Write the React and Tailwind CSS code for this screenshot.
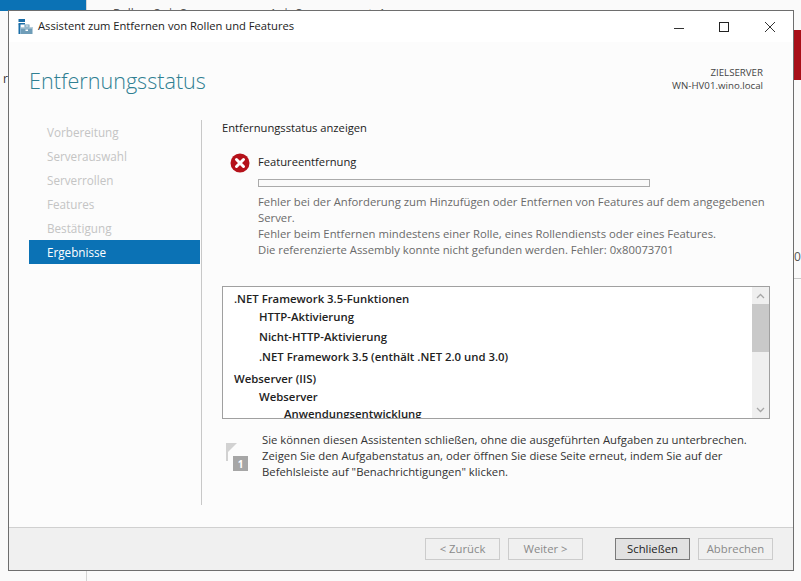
import React from "react";

const nav = ["Vorbereitung", "Serverauswahl", "Serverrollen", "Features", "Bestätigung"];

const rows = [
  { t: ".NET Framework 3.5-Funktionen", c: "pl-[11px]" },
  { t: "HTTP-Aktivierung", c: "pl-[36px]" },
  { t: "Nicht-HTTP-Aktivierung", c: "pl-[36px] mt-[2px]" },
  { t: ".NET Framework 3.5 (enthält .NET 2.0 und 3.0)", c: "pl-[36px] mt-[2px]" },
  { t: "Webserver (IIS)", c: "pl-[11px] mt-[4px]" },
  { t: "Webserver", c: "pl-[36px]" },
  { t: "Anwendungsentwicklung", c: "pl-[61px] mt-[-1px]" },
];

function Btn({ children, primary, className = "" }) {
  return (
    <div
      className={
        "w-[75px] h-[22px] flex items-center justify-center border text-[11.3px] " +
        (primary
          ? "border-[#7a7a7a] bg-[#e1e1e1] text-[#222222] "
          : "border-[#cccccc] bg-[#f0f0f0] text-[#8a8a8a] ") +
        className
      }
    >
      {children}
    </div>
  );
}

function WizardIcon() {
  return (
    <svg width="15" height="15" viewBox="0 0 15 15">
      <rect x="0.5" y="0" width="6.5" height="3" fill="#1b6ea8" />
      <rect x="0.5" y="4" width="6.5" height="1.5" fill="#1b6ea8" />
      <rect x="0.5" y="5" width="2" height="10" fill="#1b6ea8" />
      <rect x="3" y="8" width="11.5" height="7" fill="#6f9db8" />
      <rect x="3" y="8" width="11.5" height="1.5" fill="#b9cfdc" />
      <rect x="7" y="6" width="4" height="2" fill="none" stroke="#6f9db8" />
      <rect x="7.5" y="10.5" width="2.5" height="1.5" fill="#ffffff" />
    </svg>
  );
}

function ErrorIcon() {
  return (
    <svg width="20" height="20" viewBox="0 0 20 20">
      <circle cx="10" cy="10" r="9.5" fill="#b5121b" />
      <path d="M6.5 6.5 L13.5 13.5 M13.5 6.5 L6.5 13.5" stroke="#ffffff" strokeWidth="3" strokeLinecap="round" />
    </svg>
  );
}

function FlagIcon() {
  return (
    <svg width="23" height="28" viewBox="0 0 23 28">
      <rect x="0" y="0" width="2" height="18" fill="#d2d2d2" />
      <path d="M2 0 H11 L2 9 Z" fill="#d2d2d2" />
      <rect x="7" y="13" width="15" height="15" fill="#a6a6a6" />
      <text x="14.5" y="24.5" fontSize="10" fontWeight="700" fill="#ffffff" textAnchor="middle" fontFamily="'Open Sans', sans-serif">1</text>
    </svg>
  );
}

export default function App() {
  return (
    <div className="relative w-[801px] h-[581px] overflow-hidden bg-[#fafafa] font-['Open_Sans',sans-serif]">
      {/* Server manager behind the dialog */}
      <div className="flex h-full">
        <div className="w-[87px] h-full border-r border-[#d4d4d4] shrink-0">
          <div className="h-[11px] bg-[#0b72b5]" />
          <div className="mt-[60px] pl-[3px] text-[12px] leading-[16px] text-[#333333]">r</div>
        </div>
        <div className="pl-[26px] text-[#555555]">
          <div className="mt-[-19px] h-[21px] text-[15px] leading-[21px] font-semibold text-[#333333] whitespace-nowrap">Rollen und Servergruppen</div>
          <div className="mt-[4px] text-[12px] leading-[16px] whitespace-nowrap">
            Rollen: 3 &nbsp;|&nbsp; Servergruppen: 1 &nbsp;|&nbsp; Servergesamt: 1
          </div>
        </div>
      </div>
      <div className="absolute right-0 top-[30px] w-[8px] h-[50px] bg-[#a80f18]" />
      <div className="absolute left-[794px] top-[249px] text-[12px] leading-[16px] text-[#555555]">0</div>
      <div className="absolute left-[794px] top-[278px] w-[7px] h-px bg-[#c8c8c8]" />

      {/* Dialog */}
      <div className="absolute left-[8px] top-[10px] w-[786px] h-[561px] border border-[#6e6e6e] bg-[#fcfcfc] flex flex-col">
        <div className="h-[31px] bg-white flex items-center shrink-0 pl-[9px]">
          <WizardIcon />
          <span className="ml-[5px] text-[11.2px] text-[#222222]">Assistent zum Entfernen von Rollen und Features</span>
          <div className="ml-auto flex items-center">
            <svg width="12" height="12" viewBox="0 0 12 12" className="mr-[33px]">
              <path d="M1 7.5 H11" stroke="#333333" strokeWidth="1" />
            </svg>
            <svg width="12" height="12" viewBox="0 0 12 12" className="mr-[34px]">
              <rect x="1.5" y="1.5" width="9" height="9" fill="none" stroke="#222222" strokeWidth="1" />
            </svg>
            <svg width="12" height="12" viewBox="0 0 12 12" className="mr-[17px]">
              <path d="M1 1 L11 11 M11 1 L1 11" stroke="#333333" strokeWidth="1" />
            </svg>
          </div>
        </div>

        <div className="h-[48px] shrink-0 flex items-start justify-between pl-[20px] pr-[30px]">
          <h1 className="text-[21.6px] leading-[30px] mt-[24px] font-light text-[#2f7f92]">Entfernungsstatus</h1>
          <div className="text-right text-[9.7px] leading-[13px] mt-[24px] text-[#444444]">
            <div>ZIELSERVER</div>
            <div>WN-HV01.wino.local</div>
          </div>
        </div>

        <div className="flex flex-1 min-h-0 mt-[30px] pl-[20px]">
          <div className="w-[171px] shrink-0 text-[11.7px]">
            {nav.map((n) => (
              <div key={n} className="h-[24px] flex items-center pl-[18px] pt-[2px] text-[#c4c4c4]">{n}</div>
            ))}
            <div className="h-[24px] flex items-center pl-[18px] pt-[2px] bg-[#0b72b5] text-white">Ergebnisse</div>
          </div>

          <div className="w-px ml-[1px] h-[385px] bg-[#c8c8c8] shrink-0" />

          <div className="w-[548px] ml-[20px] text-[11.2px]">
            <div className="h-[16px] leading-[16px] text-[#222222]">Entfernungsstatus anzeigen</div>
            <div className="flex mt-[17px]">
              <div className="w-[36px] pl-[8px] shrink-0"><ErrorIcon /></div>
              <div className="flex-1">
                <div className="h-[16px] leading-[16px] pt-[1px] text-[#222222]">Featureentfernung</div>
                <div className="mt-[10px] w-[392px] h-[8px] border border-[#aaaaaa] bg-[#fafafa]" />
                <div className="mt-[7px] leading-[16px] text-[11.3px] text-[#6a6a6a]">
                  <div>Fehler bei der Anforderung zum Hinzufügen oder Entfernen von Features auf dem angegebenen</div>
                  <div>Server.</div>
                  <div>Fehler beim Entfernen mindestens einer Rolle, eines Rollendiensts oder eines Features.</div>
                  <div>Die referenzierte Assembly konnte nicht gefunden werden. Fehler: 0x80073701</div>
                </div>
              </div>
            </div>

            <div className="mt-[28px] h-[133px] border border-[#a0a0a0] bg-white flex overflow-hidden">
              <div className="flex-1 min-w-0 pt-[3px] text-[11.35px] font-semibold text-[#222222] overflow-hidden">
                {rows.map((r) => (
                  <div key={r.t} className={"flex items-center h-[18px] " + r.c}>{r.t}</div>
                ))}
              </div>
              <div className="w-[17px] shrink-0 bg-[#efefef] flex flex-col items-center">
                <div className="h-[17px] flex items-center justify-center">
                  <svg width="9" height="6" viewBox="0 0 9 6"><path d="M1 5 L4.5 1.5 L8 5" fill="none" stroke="#a6a6a6" strokeWidth="1.3" /></svg>
                </div>
                <div className="w-full h-[48px] bg-[#c9c9c9]" />
                <div className="flex-1" />
                <div className="h-[17px] flex items-center justify-center">
                  <svg width="9" height="6" viewBox="0 0 9 6"><path d="M1 1 L4.5 4.5 L8 1" fill="none" stroke="#a6a6a6" strokeWidth="1.3" /></svg>
                </div>
              </div>
            </div>

            <div className="flex mt-[13px]">
              <div className="pl-[4px] pt-[11px] w-[40px] shrink-0"><FlagIcon /></div>
              <div className="leading-[16px] text-[11.3px] text-[#333333]">
                <div>Sie können diesen Assistenten schließen, ohne die ausgeführten Aufgaben zu unterbrechen.</div>
                <div>Zeigen Sie den Aufgabenstatus an, oder öffnen Sie diese Seite erneut, indem Sie auf der</div>
                <div>Befehlsleiste auf "Benachrichtigungen" klicken.</div>
              </div>
            </div>
          </div>
        </div>

        <div className="h-[43px] shrink-0 bg-[#f0f0f0] border-t border-[#d0d0d0] flex items-center pl-[416px]">
          <Btn>&lt; Zurück</Btn>
          <Btn className="ml-[8px]">Weiter &gt;</Btn>
          <Btn primary className="ml-[32px]">Schließen</Btn>
          <Btn className="ml-[8px]">Abbrechen</Btn>
        </div>
      </div>
    </div>
  );
}
